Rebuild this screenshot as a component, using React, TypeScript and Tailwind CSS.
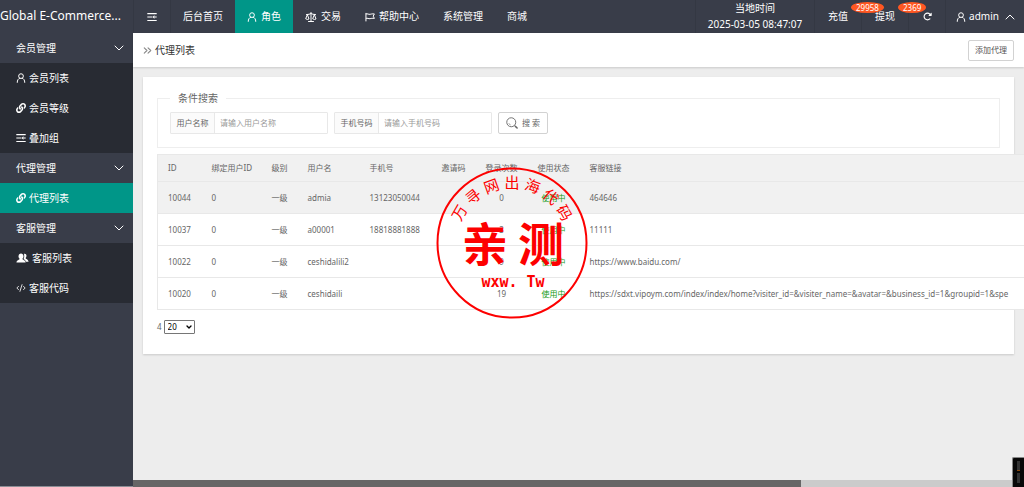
import { useState } from "react";
import type { ReactNode } from "react";
import clsx from "clsx";
import { ChevronDown, ChevronUp, ChevronsRight, CodeXml, Scale } from "lucide-react";
import { FaLink } from "react-icons/fa";
import { FaRotateRight } from "react-icons/fa6";

function UserIcon({ className }: { className?: string }) {
  return (
    <svg viewBox="0 0 16 16" fill="none" stroke="currentColor" strokeWidth="1.6" className={className}>
      <circle cx="8" cy="5" r="3.8" />
      <path d="M2 15c0-3.6 1.6-5.8 4-6.8M14 15c0-3.6-1.6-5.8-4-6.8" strokeLinecap="round" />
    </svg>
  );
}

function LinesIcon({ className }: { className?: string }) {
  return (
    <svg viewBox="0 0 16 16" fill="none" stroke="currentColor" strokeWidth="1.8" className={className}>
      <path d="M0.500 2.500h15M0.500 8h8M12 8h3.500M0.500 13.500h15" />
      <path d="M12 5.200v5.600L8.600 8z" fill="currentColor" stroke="none" />
    </svg>
  );
}

function FlagIcon({ className }: { className?: string }) {
  return (
    <svg viewBox="0 0 16 16" fill="none" stroke="currentColor" strokeWidth="1.6" className={className}>
      <path d="M1.500 1.500v13.500M1.500 3.200c2.400-1 4.200.9 6.500.5 2-.4 3.500-1 7-.6l-1.900 3.500 1.900 3.600c-3.500-.4-5 .1-7 .5-2.300.4-4.100-1.400-6.500-.5" />
    </svg>
  );
}

function GroupIcon({ className }: { className?: string }) {
  return (
    <svg viewBox="0 0 20 16" fill="currentColor" className={className}>
      <path d="M12.4 1.2c2-.7 4 .8 4 3.1 0 1.5-.6 2.8-1.5 3.6 0 1.6 4.6 2 4.8 6.1h-4.4c-.4-2.4-2-3.5-3.6-4.3.5-.9 1.1-2.2 1.1-3.9 0-1.9-.2-3.2-.4-4.6z" />
      <path d="M7.600.8c2.300 0 4 1.900 4 4.400 0 1.600-.7 3-1.800 3.800 0 2 5 2 5.200 6.200H.3C.5 11 5.400 11 5.400 9 4.300 8.200 3.600 6.800 3.600 5.200c0-2.500 1.700-4.400 4-4.400z" />
    </svg>
  );
}

function SearchIcon({ className }: { className?: string }) {
  return (
    <svg viewBox="0 0 16 16" fill="none" stroke="currentColor" className={className}>
      <circle cx="7" cy="7" r="6" strokeWidth="1.2" />
      <path d="M3.800 8.500A3.800 3.800 0 0 0 6 10.500M11.300 11.300l1 1" />
      <path d="M12.500 12.500l2.300 2.100" strokeWidth="2" strokeLinecap="round" />
    </svg>
  );
}

const navItems: { label: string; icon?: ReactNode; active?: boolean }[] = [
  { label: "后台首页" },
  { label: "角色", icon: <UserIcon className="size-[10px]" />, active: true },
  { label: "交易", icon: <Scale className="size-3" /> },
  { label: "帮助中心", icon: <FlagIcon className="size-[10px]" /> },
  { label: "系统管理" },
  { label: "商城" },
];

const menu: { title: string; items: { label: string; icon: ReactNode; active?: boolean }[] }[] = [
  {
    title: "会员管理",
    items: [
      { label: "会员列表", icon: <UserIcon className="size-[10px]" /> },
      { label: "会员等级", icon: <FaLink className="size-[10px]" /> },
      { label: "叠加组", icon: <LinesIcon className="size-[10px]" /> },
    ],
  },
  {
    title: "代理管理",
    items: [{ label: "代理列表", icon: <FaLink className="size-[10px]" />, active: true }],
  },
  {
    title: "客服管理",
    items: [
      { label: "客服列表", icon: <GroupIcon className="h-[10px] w-[13px]" /> },
      { label: "客服代码", icon: <CodeXml className="size-[10px]" /> },
    ],
  },
];

const columns = [
  { label: "ID", width: "w-[44px]" },
  { label: "绑定用户ID", width: "w-[60px]" },
  { label: "级别", width: "w-[36px]" },
  { label: "用户名", width: "w-[62px]" },
  { label: "手机号", width: "w-[72px]" },
  { label: "邀请码", width: "w-[44px]" },
  { label: "登录次数", width: "w-[52px]" },
  { label: "使用状态", width: "w-[52px]" },
  { label: "客服链接", width: "w-[742px]" },
];

const agents = [
  { id: 10044, name: "admia", phone: "13123050044", logins: 0, link: "464646" },
  { id: 10037, name: "a00001", phone: "18818881888", logins: 3, link: "11111" },
  { id: 10022, name: "ceshidalili2", phone: "", logins: 9, link: "https://www.baidu.com/" },
  {
    id: 10020,
    name: "ceshidaili",
    phone: "",
    logins: 19,
    link: "https://sdxt.vipoym.com/index/index/home?visiter_id=&visiter_name=&avatar=&business_id=1&groupid=1&spe",
  },
];

const stampChars = [
  { char: "万", angle: -60 },
  { char: "寻", angle: -40 },
  { char: "网", angle: -20 },
  { char: "出", angle: 0 },
  { char: "海", angle: 20 },
  { char: "代", angle: 40 },
  { char: "码", angle: 60 },
];

function TopBar() {
  return (
    <header className="flex h-[33px] shrink-0 bg-[#393d49] text-[10px] text-white">
      <div className="w-[133px] shrink-0 text-[12px] leading-8 whitespace-nowrap">Global E-Commerce...</div>
      <button aria-label="收起菜单" className="flex w-[38px] items-center justify-center border-x border-[#343843]">
        <LinesIcon className="size-[10px]" />
      </button>
      <nav className="flex">
        {navItems.map((item) => (
          <a
            key={item.label}
            href="#"
            className={clsx("flex items-center gap-1 px-3 whitespace-nowrap", item.active && "bg-[#009688]")}
          >
            {item.icon}
            {item.label}
          </a>
        ))}
      </nav>
      <div className="ml-auto flex">
        <div className="flex w-[120px] flex-col items-center border-x border-[#343843] leading-4">
          <span>当地时间</span>
          <span>2025-03-05 08:47:07</span>
        </div>
        <a href="#" className="relative flex w-[47px] items-center justify-center border-r border-[#343843]">
          充值
          <Badge count={29958} />
        </a>
        <a href="#" className="relative flex w-[47px] items-center justify-center border-r border-[#343843]">
          提现
          <Badge count={2369} />
        </a>
        <button aria-label="刷新" className="flex w-[37px] items-center justify-center border-r border-[#343843]">
          <FaRotateRight className="size-[9px]" />
        </button>
        <button className="flex w-[78px] items-center justify-center gap-[3px] pl-1">
          <UserIcon className="size-[10px]" />
          admin
          <ChevronUp className="size-4" strokeWidth={1.5} />
        </button>
      </div>
    </header>
  );
}

function Badge({ count }: { count: number }) {
  return (
    <span className="absolute top-[2px] left-9 z-10 rounded-[50%] bg-[#ff5722] px-[5px] text-[8px] leading-[11px]">
      {count}
    </span>
  );
}

function Sidebar() {
  return (
    <aside className="w-[133px] shrink-0 border-b border-[#8b8e95] bg-[#393d49] text-[10px] text-white">
      {menu.map((group) => (
        <section key={group.title}>
          <button className="flex h-[30px] w-full items-center justify-between pr-[6px] pl-4">
            {group.title}
            <ChevronDown className="size-4" strokeWidth={1.5} />
          </button>
          <ul className="bg-[#282b33]">
            {group.items.map((item) => (
              <li key={item.label}>
                <a
                  href="#"
                  className={clsx("flex h-[30px] items-center gap-[3px] pl-4", item.active && "bg-[#009688]")}
                >
                  {item.icon}
                  {item.label}
                </a>
              </li>
            ))}
          </ul>
        </section>
      ))}
    </aside>
  );
}

function SearchField({ id, label, placeholder }: { id: string; label: string; placeholder: string }) {
  return (
    <div className="flex h-[22px] rounded-[1px] border border-[#e8e8e8]">
      <label htmlFor={id} className="flex w-11 items-center justify-center border-r border-[#e8e8e8] bg-[#fbfbfb]">
        {label}
      </label>
      <input id={id} placeholder={placeholder} className="w-28 px-[5px] outline-none placeholder:text-[#999]" />
    </div>
  );
}

function AgentTable() {
  return (
    <table className="mt-[6px] w-[1164px] table-fixed border border-[#e8e8e8] text-left">
      <thead className="bg-[#f1f1f1]">
        <tr className="h-[27px] border-b border-[#e8e8e8]">
          {columns.map((col) => (
            <th key={col.label} className={clsx("pl-[10px] font-normal whitespace-nowrap", col.width)}>
              {col.label}
            </th>
          ))}
        </tr>
      </thead>
      <tbody className="bg-white">
        {agents.map((agent, i) => (
          <tr key={agent.id} className={clsx("h-8 border-b border-[#e8e8e8]", i === 0 && "bg-[#f1f1f1]")}>
            <td className="pl-[10px]">{agent.id}</td>
            <td className="pl-[10px]">0</td>
            <td className="pl-[10px]">一级</td>
            <td className="pl-[10px]">{agent.name}</td>
            <td className="pl-[10px]">{agent.phone}</td>
            <td className="pl-[10px]" />
            <td className="text-center">{agent.logins}</td>
            <td className="text-center text-[#159a15]">使用中</td>
            <td className="pl-[10px] whitespace-nowrap">{agent.link}</td>
          </tr>
        ))}
      </tbody>
    </table>
  );
}

function Stamp() {
  return (
    <svg
      viewBox="0 0 152 152"
      className="pointer-events-none absolute top-[167px] left-[436px] size-[152px] fill-[#fd0000] font-['Noto_Sans_CJK_SC',sans-serif]"
    >
      <circle cx="76" cy="76" r="74.500" fill="none" stroke="#fd0000" strokeWidth="2" />
      {stampChars.map(({ char, angle }) => (
        <text key={char} x="76" y="21" textAnchor="middle" fontSize="15" transform={`rotate(${angle} 76 76)`}>
          {char}
        </text>
      ))}
      <text x="49" y="94" textAnchor="middle" fontSize="46" fontWeight="700">
        亲
      </text>
      <text x="105" y="94" textAnchor="middle" fontSize="46" fontWeight="700">
        测
      </text>
      <text x="77" y="120" textAnchor="middle" fontSize="15" className="font-['DejaVu_Sans_Mono',monospace] font-bold">
        wxw. Tw
      </text>
    </svg>
  );
}

export default function App() {
  const [pageSize, setPageSize] = useState("20");

  return (
    <div className="relative flex h-screen flex-col overflow-hidden bg-[#ededed] font-['Noto_Sans','Noto_Sans_CJK_SC',sans-serif]">
      <TopBar />
      <div className="flex min-h-0 flex-1">
        <Sidebar />
        <div className="flex min-w-0 flex-1 flex-col">
          {/* Title bar */}
          <div className="flex h-[34px] shrink-0 items-center justify-between bg-white pr-[10px] pl-2 text-[10px] text-[#333] shadow-[0_1px_2px_rgba(0,0,0,0.15)]">
            <h1 className="flex items-center gap-[1px]">
              <ChevronsRight className="size-[13px] text-[#888]" strokeWidth={2} />
              代理列表
            </h1>
            <button className="h-[21px] rounded-[2px] border border-[#d2d2d2] px-[6px] text-[8px] text-[#555]">
              添加代理
            </button>
          </div>

          <main className="min-h-0 flex-1 overflow-hidden p-[10px] text-[8px] text-[#666]">
            <div className="bg-white px-[14px] pt-[14px] pb-5 shadow-[0_1px_2px_rgba(0,0,0,0.15)]">
              <form onSubmit={(e) => e.preventDefault()}>
                <fieldset className="border border-[#eeeeee] px-3 pb-[13px]">
                  <legend className="px-2 text-[10px] leading-[14px]">条件搜索</legend>
                  <div className="flex gap-[6px] pt-[7px]">
                    <SearchField id="username" label="用户名称" placeholder="请输入用户名称" />
                    <SearchField id="phone" label="手机号码" placeholder="请输入手机号码" />
                    <button
                      type="submit"
                      className="flex h-[22px] w-[50px] items-center justify-center gap-1 rounded-[2px] border border-[#d2d2d2]"
                    >
                      <SearchIcon className="size-3" />
                      搜 索
                    </button>
                  </div>
                </fieldset>
              </form>

              <AgentTable />

              <div className="mt-[10px] flex items-center gap-[2px]">
                <label htmlFor="page-size">4</label>
                <div className="relative">
                  <select
                    id="page-size"
                    value={pageSize}
                    onChange={(e) => setPageSize(e.target.value)}
                    className="block h-[14px] w-[31px] appearance-none rounded-[1px] border border-[#767676] bg-white pl-[3px] leading-3 text-black"
                  >
                    <option>20</option>
                    <option>50</option>
                    <option>100</option>
                  </select>
                  <ChevronDown
                    className="pointer-events-none absolute top-[3px] right-[2px] size-2 text-black"
                    strokeWidth={4}
                  />
                </div>
              </div>
            </div>
          </main>

          {/* Horizontal scrollbar */}
          <div className="h-[7px] shrink-0 bg-[#cbcbcb]">
            <div className="h-full w-3/4 bg-[#666]" />
          </div>
        </div>
      </div>

      <Stamp />

      {/* Side handle */}
      <div className="absolute right-0 bottom-0 flex h-[30px] w-3 flex-col items-center gap-[2px] rounded-tl-[2px] border-t border-l border-[#888] bg-[#080808] pt-[3px]">
        <span className="h-[10px] w-[3px] border-b border-[#8a4b10] bg-[#333]" />
        <span className="h-[10px] w-[3px] bg-[#333]" />
      </div>
    </div>
  );
}
